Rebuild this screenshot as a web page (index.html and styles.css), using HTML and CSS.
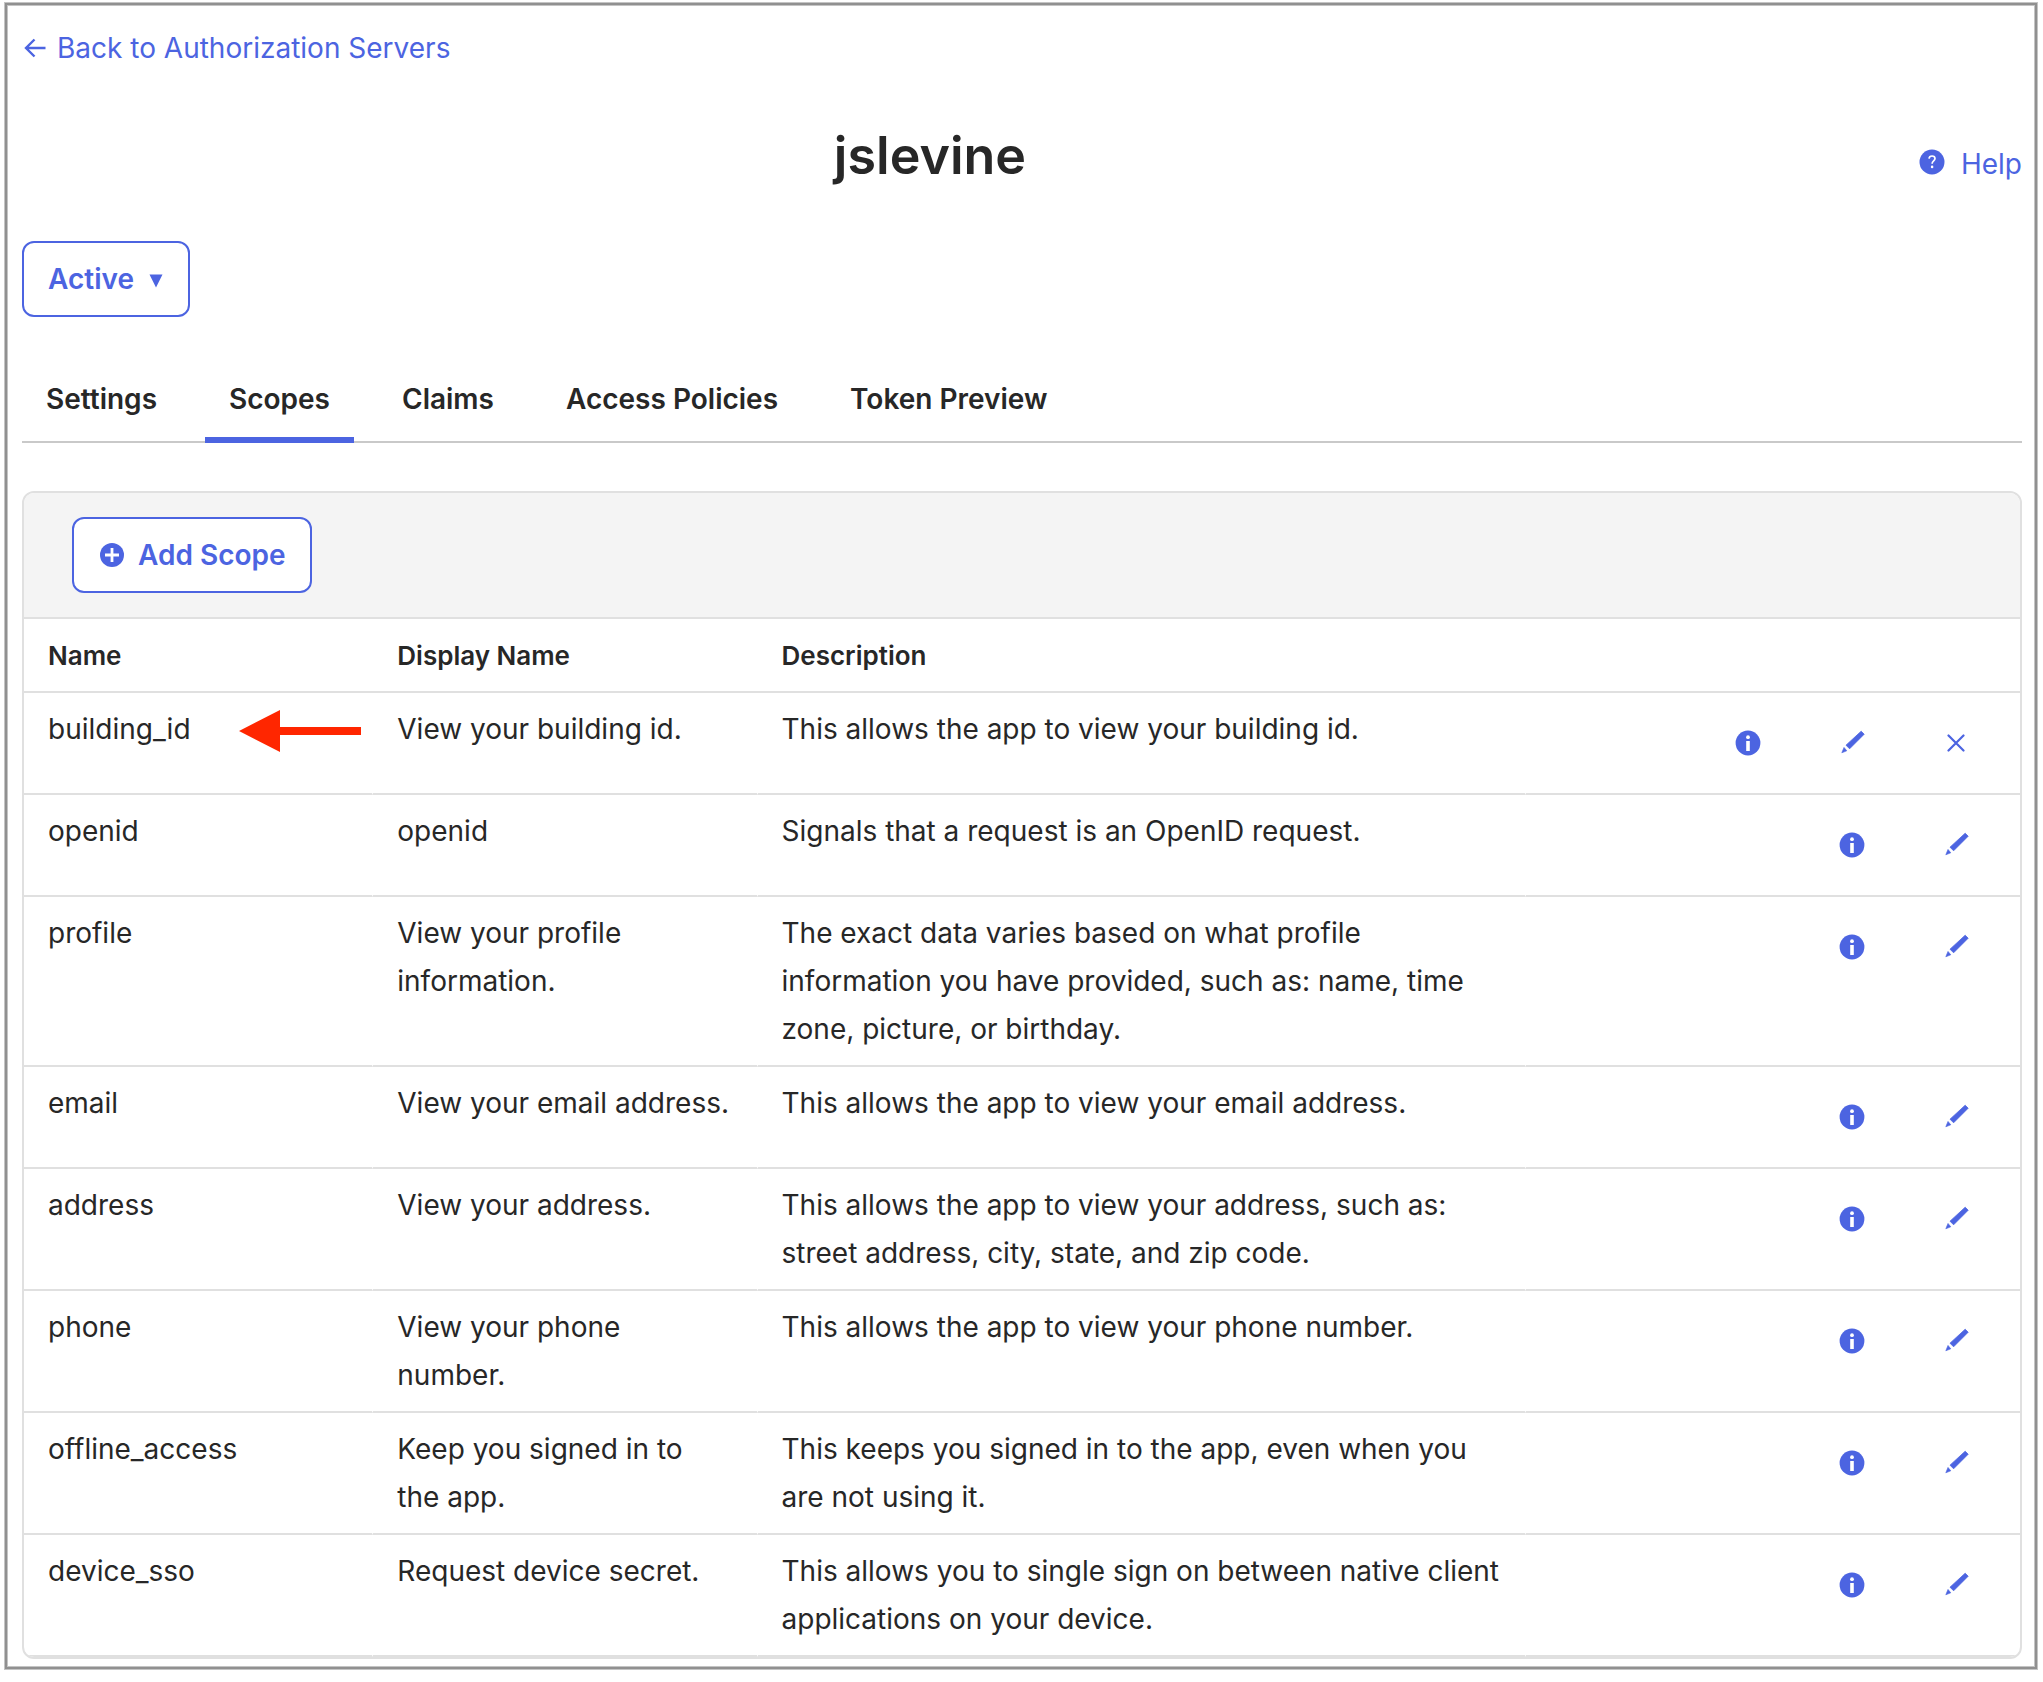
FILE: index.html
```html
<!DOCTYPE html>
<html lang="en">
<head>
<meta charset="utf-8">
<title>jslevine - Scopes</title>
<link rel="stylesheet" href="styles.css">
</head>
<body>
<svg class="sprite" aria-hidden="true">
  <symbol id="info" viewBox="0 0 26 26">
    <circle cx="13" cy="13" r="12.4" fill="currentColor"/>
    <circle cx="13" cy="7.2" r="1.9" fill="#fff"/>
    <path d="M11.2 11h3.6v10h-3.6z" fill="#fff"/>
  </symbol>
  <symbol id="pencil" viewBox="-2 0 26 26">
    <path d="M20.2 1.2 23.2 4.2 8.6 18.8 5 15.2Z" fill="currentColor" stroke="currentColor" stroke-width=".8" stroke-linejoin="round"/>
    <path d="M3 17.4 5.8 20.8 .8 22.8Z" fill="currentColor" stroke="currentColor" stroke-width=".6" stroke-linejoin="round"/>
  </symbol>
  <symbol id="cross" viewBox="0 0 18 18">
    <path d="M1.5 1.5 16.5 16.5M16.5 1.5 1.5 16.5" stroke="currentColor" stroke-width="2.2" stroke-linecap="round" fill="none"/>
  </symbol>
</svg>
<main class="page">
  <a class="back" href="#">
    <svg class="back-icon" viewBox="0 0 22 20" aria-hidden="true"><path d="M21.5 10H2M10.5 1.5 2 10l8.5 8.5" fill="none" stroke="currentColor" stroke-width="2.4"/></svg>
    Back to Authorization Servers
  </a>

  <header class="header">
    <h1 class="title">jslevine</h1>
    <a class="help" href="#">
      <svg class="help-icon" viewBox="0 0 26 26" aria-hidden="true">
        <circle cx="13" cy="13" r="12.5" fill="currentColor"/>
        <path d="M10 9.6c.2-1.700 1.400-2.600 3-2.600 1.800 0 3 1 3 2.500 0 2.500-2.900 2.300-2.900 5.300" fill="none" stroke="#fff" stroke-width="1.700"/>
        <circle cx="13.100" cy="17.900" r="1.300" fill="#fff"/>
      </svg>
      Help
    </a>
  </header>

  <button class="button" type="button">
    Active
    <svg class="caret" viewBox="-1 0 16 14" aria-hidden="true"><path d="M.5.5h13L7 13.500Z" fill="currentColor"/></svg>
  </button>

  <nav class="tabs">
    <a class="tab" href="#">Settings</a>
    <a class="tab tab-active" href="#" aria-current="page">Scopes</a>
    <a class="tab" href="#">Claims</a>
    <a class="tab" href="#">Access Policies</a>
    <a class="tab" href="#">Token Preview</a>
  </nav>

  <section class="panel">
    <div class="toolbar">
      <button class="button" type="button">
        <svg class="plus-icon" viewBox="-2 0 26 24" aria-hidden="true"><circle cx="12" cy="12" r="12" fill="currentColor"/><path d="M12 5v14M5 12h14" stroke="#fff" stroke-width="2.800"/></svg>
        Add Scope
      </button>
    </div>
    <table class="scopes">
      <colgroup><col class="col-name"><col class="col-display"><col class="col-description"><col></colgroup>
      <thead>
        <tr><th scope="col">Name</th><th scope="col">Display Name</th><th scope="col">Description</th><th aria-label="Actions"></th></tr>
      </thead>
      <tbody>
        <tr>
          <td class="marked">building_id
            <svg class="pointer" viewBox="0 0 122 42" aria-hidden="true"><path d="M0 21 41 0v17h81v8H41v17Z" fill="#ff2600"/></svg>
          </td>
          <td>View your building id.</td>
          <td>This allows the app to view your building id.</td>
          <td><div class="actions">
            <button class="action" type="button" aria-label="Info"><svg class="icon-info"><use href="#info"/></svg></button>
            <button class="action" type="button" aria-label="Edit"><svg class="icon-pencil"><use href="#pencil"/></svg></button>
            <button class="action" type="button" aria-label="Delete"><svg class="icon-cross"><use href="#cross"/></svg></button>
          </div></td>
        </tr>
        <tr>
          <td>openid</td>
          <td>openid</td>
          <td>Signals that a request is an OpenID request.</td>
          <td><div class="actions">
            <button class="action" type="button" aria-label="Info"><svg class="icon-info"><use href="#info"/></svg></button>
            <button class="action" type="button" aria-label="Edit"><svg class="icon-pencil"><use href="#pencil"/></svg></button>
          </div></td>
        </tr>
        <tr>
          <td>profile</td>
          <td>View your profile information.</td>
          <td>The exact data varies based on what profile information you have provided, such as: name, time zone, picture, or birthday.</td>
          <td><div class="actions">
            <button class="action" type="button" aria-label="Info"><svg class="icon-info"><use href="#info"/></svg></button>
            <button class="action" type="button" aria-label="Edit"><svg class="icon-pencil"><use href="#pencil"/></svg></button>
          </div></td>
        </tr>
        <tr>
          <td>email</td>
          <td>View your email address.</td>
          <td>This allows the app to view your email address.</td>
          <td><div class="actions">
            <button class="action" type="button" aria-label="Info"><svg class="icon-info"><use href="#info"/></svg></button>
            <button class="action" type="button" aria-label="Edit"><svg class="icon-pencil"><use href="#pencil"/></svg></button>
          </div></td>
        </tr>
        <tr>
          <td>address</td>
          <td>View your address.</td>
          <td>This allows the app to view your address, such as: street address, city, state, and zip code.</td>
          <td><div class="actions">
            <button class="action" type="button" aria-label="Info"><svg class="icon-info"><use href="#info"/></svg></button>
            <button class="action" type="button" aria-label="Edit"><svg class="icon-pencil"><use href="#pencil"/></svg></button>
          </div></td>
        </tr>
        <tr>
          <td>phone</td>
          <td>View your phone number.</td>
          <td>This allows the app to view your phone number.</td>
          <td><div class="actions">
            <button class="action" type="button" aria-label="Info"><svg class="icon-info"><use href="#info"/></svg></button>
            <button class="action" type="button" aria-label="Edit"><svg class="icon-pencil"><use href="#pencil"/></svg></button>
          </div></td>
        </tr>
        <tr>
          <td>offline_access</td>
          <td>Keep you signed in to the app.</td>
          <td>This keeps you signed in to the app, even when you are not using it.</td>
          <td><div class="actions">
            <button class="action" type="button" aria-label="Info"><svg class="icon-info"><use href="#info"/></svg></button>
            <button class="action" type="button" aria-label="Edit"><svg class="icon-pencil"><use href="#pencil"/></svg></button>
          </div></td>
        </tr>
        <tr>
          <td>device_sso</td>
          <td>Request device secret.</td>
          <td>This allows you to single sign on between native client applications on your device.</td>
          <td><div class="actions">
            <button class="action" type="button" aria-label="Info"><svg class="icon-info"><use href="#info"/></svg></button>
            <button class="action" type="button" aria-label="Edit"><svg class="icon-pencil"><use href="#pencil"/></svg></button>
          </div></td>
        </tr>
      </tbody>
    </table>
  </section>
</main>
</body>
</html>
```
FILE: styles.css
```css
* {
  box-sizing: border-box;
}

body {
  margin: 0;
  padding: 3px 6px 12px 5px;
  background: #fff;
  color: #272727;
  font-family: Inter, "Liberation Sans", sans-serif;
  font-size: 28px;
  line-height: 48px;
}

a {
  color: #4c64e1;
  text-decoration: none;
}

svg {
  display: block;
  flex: none;
}

.sprite {
  position: absolute;
  width: 0;
  height: 0;
}

.page {
  padding: 19px 13px 8px 15px;
  border: 2px solid #909090;
  box-shadow: 0 0 0 1px #c4c4c4, inset 0 0 0 1px #c4c4c4;
}

.back {
  display: flex;
  align-items: center;
  gap: 11px;
  width: fit-content;
  padding-left: 2px;
}

.back-icon {
  width: 22px;
  height: 20px;
}

.header {
  display: flex;
  align-items: flex-end;
  margin-top: 52px;
}

.title {
  flex: 1;
  margin: 0;
  font-size: 52px;
  font-weight: 600;
  line-height: 64px;
  text-align: center;
}

.help {
  display: flex;
  flex: 0 0 184px;
  align-items: center;
  justify-content: flex-end;
  gap: 16px;
}

.help-icon {
  width: 26px;
  height: 26px;
  margin-bottom: 4px;
}

.button {
  display: flex;
  align-items: center;
  gap: 14px;
  height: 76px;
  padding: 0 24px;
  border: 2px solid #4c64e1;
  border-radius: 12px;
  background: #fff;
  color: #4c64e1;
  font: inherit;
  font-weight: 600;
}

.header + .button {
  margin-top: 53px;
}

.caret {
  width: 16px;
  height: 14px;
  margin-top: 4px;
}

.plus-icon {
  width: 26px;
  height: 24px;
}

.tabs {
  display: flex;
  gap: 24px;
  margin-top: 58px;
  box-shadow: inset 0 -2px #c9c9c9;
}

.tab {
  padding: 0 24px 14px;
  border-bottom: 6px solid transparent;
  color: #272727;
  font-weight: 600;
}

.tab-active {
  border-bottom-color: #4c64e1;
}

.panel {
  margin-top: 48px;
  border: 2px solid #e0e0e0;
  border-radius: 12px;
  overflow: hidden;
}

.toolbar {
  padding: 24px 48px;
  border-bottom: 2px solid #e0e0e0;
  background: #f4f4f4;
}

.scopes {
  width: 100%;
  border-spacing: 0;
  table-layout: fixed;
}

.col-name {
  width: 17.5%;
}

.col-display {
  width: 19.25%;
}

.col-description {
  width: 38.5%;
}

th,
td {
  padding: 12px 24px;
  border-bottom: 2px solid #e0e0e0;
  text-align: left;
  vertical-align: top;
}

th {
  padding-top: 13px;
  padding-bottom: 11px;
  font-size: 26px;
  font-weight: 600;
}

td:not(:last-child) {
  padding-right: 23px;
  border-right: 1px solid #fff;
}

td:nth-child(2) {
  padding-right: 26px;
}

.marked {
  position: relative;
}

.pointer {
  position: absolute;
  top: 17px;
  right: 11px;
  width: 122px;
  height: 42px;
}

.actions {
  display: flex;
  justify-content: flex-end;
  gap: 24px;
}

.action {
  display: flex;
  align-items: center;
  justify-content: center;
  width: 80px;
  height: 76px;
  padding: 0;
  border: 0;
  background: none;
  color: #4c64e1;
}

.icon-info,
.icon-pencil {
  width: 26px;
  height: 26px;
}

.icon-cross {
  width: 18px;
  height: 18px;
}
```
